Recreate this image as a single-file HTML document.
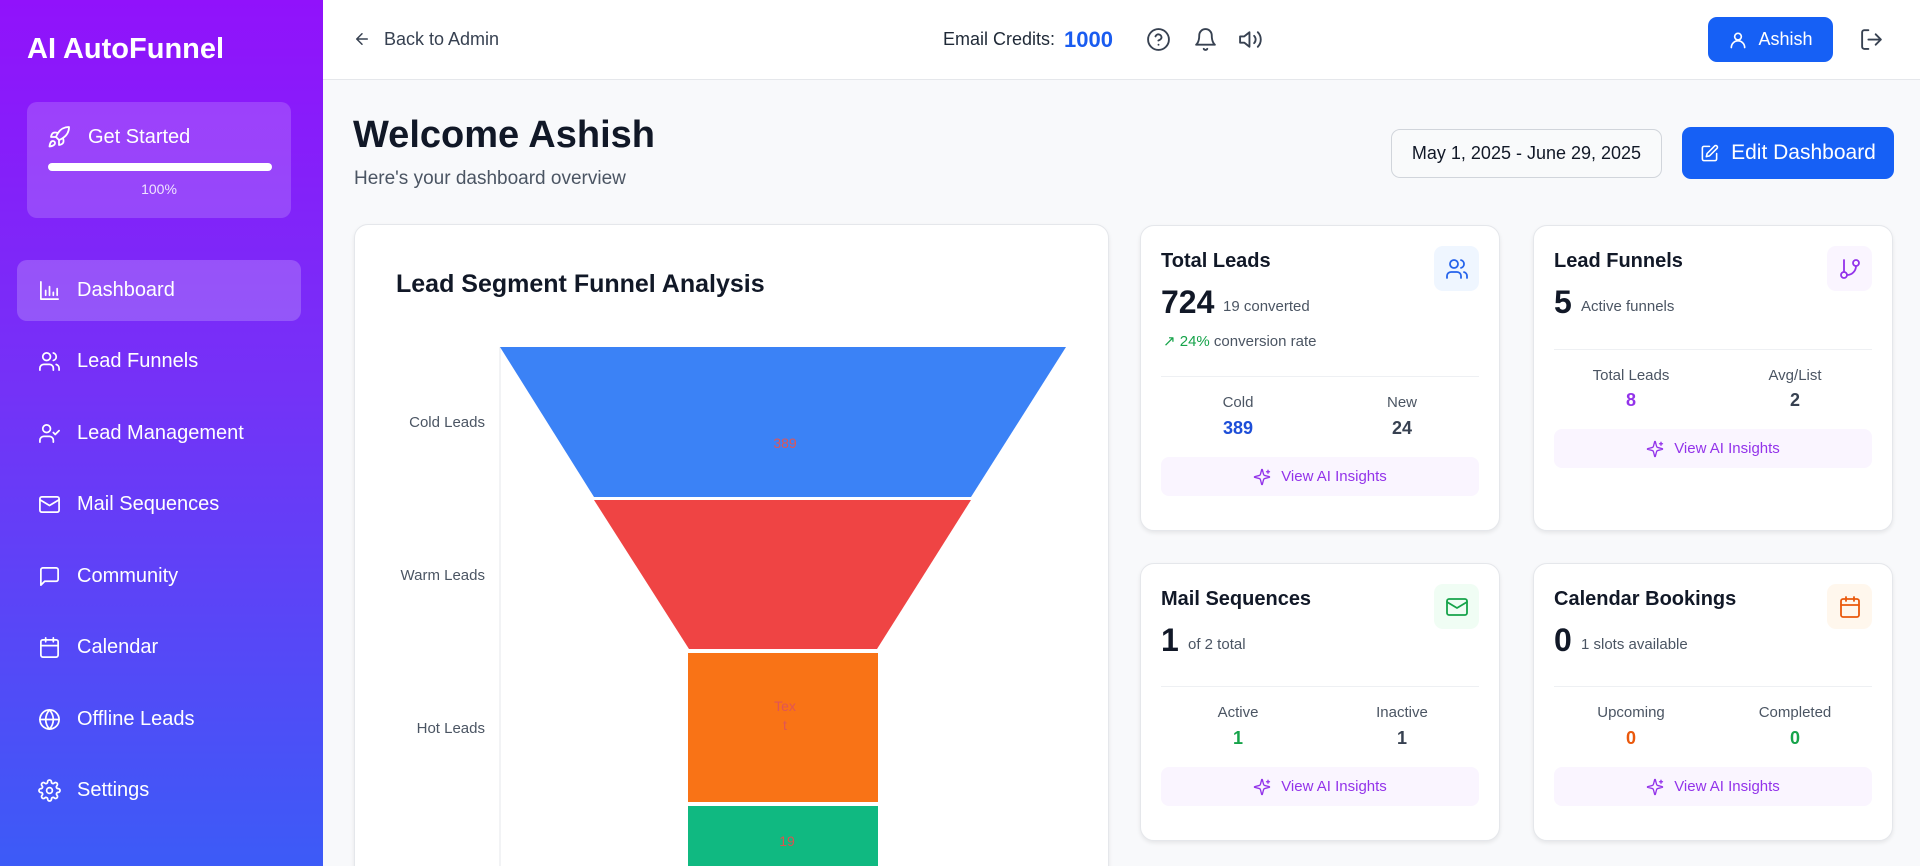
<!DOCTYPE html>
<html style="width:1920px;height:866px;overflow:hidden"><head><meta charset="utf-8"><style>
*{box-sizing:border-box;margin:0;padding:0}
body{width:1920px;height:866px;overflow:hidden;font-family:"Liberation Sans",Arial,sans-serif;background:#f8f9fb;position:relative;color:#111827}
.abs{position:absolute}
.sb{left:0;top:0;width:323px;height:866px;background:linear-gradient(180deg,#9112fb 0%,#7432f7 45%,#3c5bf7 100%)}
.logo{left:27px;top:33px;color:#fff;font-size:29px;font-weight:bold}
.gs{left:27px;top:102px;width:264px;height:116px;border-radius:10px;background:rgba(255,255,255,.17)}
.nav{left:17px;width:284px;height:61px;border-radius:10px;color:#fff;font-size:20px;display:flex;align-items:center;padding-left:21px}
.nav svg{width:23px;height:23px;margin-right:16px;fill:none;stroke:#fff;stroke-width:1.8;stroke-linecap:round;stroke-linejoin:round}
.nav.act{background:rgba(255,255,255,.2)}
.hdr{left:323px;top:0;width:1597px;height:80px;background:#fff;border-bottom:1px solid #e5e7eb}
svg.i{fill:none;stroke-linecap:round;stroke-linejoin:round}
.card{background:#fff;border:1px solid #e5e7eb;border-radius:14px;box-shadow:0 2px 4px rgba(0,0,0,.08)}
.ct{font-size:20px;font-weight:bold;color:#111827}
.big{font-size:32px;font-weight:bold;color:#111827}
.sub{font-size:15px;color:#4b5563}
.lab{font-size:15px;color:#4b5563;text-align:center;width:160px}
.val{font-size:18px;font-weight:bold;text-align:center;width:160px}
.ai{height:39px;width:318px;border-radius:8px;background:#faf5ff;color:#9333ea;font-size:15px;display:flex;align-items:center;justify-content:center}
.ai svg{width:18px;height:18px;margin-right:10px;stroke:#9333ea;stroke-width:1.8}
.ib{width:45px;height:45px;border-radius:9px;display:flex;align-items:center;justify-content:center}
.ib svg{width:24px;height:24px;stroke-width:1.8}
.div{height:1px;background:#eef0f3;width:318px}
</style></head><body>
<div class="abs sb"></div>
<div class="abs logo">AI AutoFunnel</div>
<div class="abs gs"></div>
<svg class="abs i" style="left:47px;top:125px" width="24" height="24" viewBox="0 0 24 24" stroke="#fff" stroke-width="1.8"><path d="M4.5 16.5c-1.5 1.26-2 5-2 5s3.74-.5 5-2c.71-.84.7-2.130-.09-2.91a2.18 2.18 0 0 0-2.91-.09z"/><path d="m12 15-3-3a22 22 0 0 1 2-3.95A12.88 12.88 0 0 1 22 2c0 2.72-.78 7.5-6 11a22.350 22.350 0 0 1-4 2z"/><path d="M9 12H4s.55-3.03 2-4c1.62-1.08 5 0 5 0"/><path d="M12 15v5s3.03-.55 4-2c1.08-1.62 0-5 0-5"/></svg>
<div class="abs" style="left:88px;top:126px;color:#fff;font-size:20px">Get Started</div>
<div class="abs" style="left:48px;top:163px;width:224px;height:8px;border-radius:4px;background:#fff"></div>
<div class="abs" style="left:27px;top:181px;width:264px;text-align:center;color:rgba(255,255,255,.85);font-size:14px">100%</div>

<div class="abs nav act" style="top:260px"><svg viewBox="0 0 24 24"><path d="M3 3v18h18"/><path d="M8 17v-5M12 17V8M16 17v-3M20 17V10"/></svg>Dashboard</div>
<div class="abs nav" style="top:331px"><svg viewBox="0 0 24 24"><path d="M16 21v-2a4 4 0 0 0-4-4H6a4 4 0 0 0-4 4v2"/><circle cx="9" cy="7" r="4"/><path d="M22 21v-2a4 4 0 0 0-3-3.87M16 3.13a4 4 0 0 1 0 7.75"/></svg>Lead Funnels</div>
<div class="abs nav" style="top:403px"><svg viewBox="0 0 24 24"><path d="M16 21v-2a4 4 0 0 0-4-4H6a4 4 0 0 0-4 4v2"/><circle cx="9" cy="7" r="4"/><path d="m16 11 2 2 4-4"/></svg>Lead Management</div>
<div class="abs nav" style="top:474px"><svg viewBox="0 0 24 24"><rect x="2" y="4" width="20" height="16" rx="2"/><path d="m22 7-10 6L2 7"/></svg>Mail Sequences</div>
<div class="abs nav" style="top:546px"><svg viewBox="0 0 24 24"><path d="M21 15a2 2 0 0 1-2 2H7l-4 4V5a2 2 0 0 1 2-2h14a2 2 0 0 1 2 2z"/></svg>Community</div>
<div class="abs nav" style="top:617px"><svg viewBox="0 0 24 24"><rect x="3" y="4" width="18" height="18" rx="2"/><path d="M16 2v4M8 2v4M3 10h18"/></svg>Calendar</div>
<div class="abs nav" style="top:689px"><svg viewBox="0 0 24 24"><circle cx="12" cy="12" r="10"/><path d="M2 12h20M12 2a15.3 15.3 0 0 1 4 10 15.3 15.3 0 0 1-4 10 15.3 15.3 0 0 1-4-10 15.3 15.3 0 0 1 4-10z"/></svg>Offline Leads</div>
<div class="abs nav" style="top:760px"><svg viewBox="0 0 24 24"><circle cx="12" cy="12" r="3"/><path d="M19.4 15a1.65 1.65 0 0 0 .33 1.820l.06.06a2 2 0 1 1-2.83 2.830l-.06-.06a1.65 1.65 0 0 0-1.82-.33 1.65 1.65 0 0 0-1 1.51V21a2 2 0 1 1-4 0v-.09A1.65 1.65 0 0 0 9 19.4a1.65 1.65 0 0 0-1.82.33l-.06.06a2 2 0 1 1-2.83-2.83l.06-.06a1.65 1.65 0 0 0 .33-1.82 1.65 1.65 0 0 0-1.51-1H3a2 2 0 1 1 0-4h.09A1.65 1.65 0 0 0 4.6 9a1.65 1.65 0 0 0-.33-1.82l-.06-.06a2 2 0 1 1 2.83-2.83l.06.06a1.65 1.65 0 0 0 1.82.33H9a1.65 1.65 0 0 0 1-1.51V3a2 2 0 1 1 4 0v.09a1.65 1.65 0 0 0 1 1.51 1.65 1.65 0 0 0 1.82-.33l.06-.06a2 2 0 1 1 2.83 2.83l-.06.06a1.65 1.65 0 0 0-.33 1.82V9a1.65 1.65 0 0 0 1.51 1H21a2 2 0 1 1 0 4h-.09a1.65 1.65 0 0 0-1.51 1z"/></svg>Settings</div>

<div class="abs hdr"></div>
<svg class="abs i" style="left:353px;top:30px" width="18" height="18" viewBox="0 0 24 24" stroke="#374151" stroke-width="2"><path d="M19 12H5M12 19l-7-7 7-7"/></svg>
<div class="abs" style="left:384px;top:29px;font-size:18px;color:#374151">Back to Admin</div>
<div class="abs" style="left:943px;top:29px;font-size:18px;color:#1f2937">Email Credits:</div>
<div class="abs" style="left:1064px;top:27px;font-size:22px;font-weight:bold;color:#1a5cf0">1000</div>
<svg class="abs i" style="left:1146px;top:27px" width="25" height="25" viewBox="0 0 24 24" stroke="#374151" stroke-width="1.8"><circle cx="12" cy="12" r="10"/><path d="M9.1 9a3 3 0 0 1 5.8 1c0 2-3 3-3 3M12 17h.01"/></svg>
<svg class="abs i" style="left:1193px;top:27px" width="25" height="25" viewBox="0 0 24 24" stroke="#374151" stroke-width="1.8"><path d="M6 8a6 6 0 0 1 12 0c0 7 3 9 3 9H3s3-2 3-9M10.3 21a1.94 1.94 0 0 0 3.4 0"/></svg>
<svg class="abs i" style="left:1238px;top:27px" width="25" height="25" viewBox="0 0 24 24" stroke="#374151" stroke-width="1.8"><path d="M11 5 6 9H2v6h4l5 4V5zM15.5 8.5a5 5 0 0 1 0 7M19 5a10 10 0 0 1 0 14"/></svg>
<div class="abs" style="left:1708px;top:17px;width:125px;height:45px;border-radius:9px;background:#1660f5;color:#fff;font-size:18px;display:flex;align-items:center;justify-content:center"><svg class="i" width="20" height="20" viewBox="0 0 24 24" stroke="#fff" stroke-width="2" style="margin-right:10px"><circle cx="12" cy="8" r="4"/><path d="M20 21a8 8 0 0 0-16 0"/></svg>Ashish</div>
<svg class="abs i" style="left:1859px;top:27px" width="25" height="25" viewBox="0 0 24 24" stroke="#374151" stroke-width="1.8"><path d="M9 21H5a2 2 0 0 1-2-2V5a2 2 0 0 1 2-2h4M16 17l5-5-5-5M21 12H9"/></svg>

<div class="abs" style="left:353px;top:114px;font-size:38px;font-weight:bold;color:#111827">Welcome Ashish</div>
<div class="abs" style="left:354px;top:168px;font-size:19px;color:#4b5563">Here's your dashboard overview</div>
<div class="abs" style="left:1391px;top:129px;width:271px;height:49px;border:1px solid #d1d5db;border-radius:9px;background:#f9fafb;display:flex;align-items:center;justify-content:center;font-size:18px;color:#111827">May 1, 2025 - June 29, 2025</div>
<div class="abs" style="left:1682px;top:127px;width:212px;height:52px;border-radius:9px;background:#1660f5;color:#fff;font-size:21px;display:flex;align-items:center;justify-content:center"><svg class="i" width="19" height="19" viewBox="0 0 24 24" stroke="#fff" stroke-width="2" style="margin-right:12px"><path d="M12 3H5a2 2 0 0 0-2 2v14a2 2 0 0 0 2 2h14a2 2 0 0 0 2-2v-7"/><path d="M18.4 2.6a2.1 2.1 0 0 1 3 3L12 15l-4 1 1-4z"/></svg>Edit Dashboard</div>

<div class="abs card" style="left:354px;top:224px;width:755px;height:660px"></div>
<div class="abs" style="left:396px;top:270px;font-size:25px;font-weight:bold;color:#111827">Lead Segment Funnel Analysis</div>
<svg class="abs" style="left:354px;top:224px" width="755" height="642" viewBox="354 224 755 642">
<line x1="500" y1="347" x2="500" y2="866" stroke="#e5e7eb" stroke-width="1"/>
<polygon points="500,347 1066,347 971,497 594,497" fill="#3b82f6"/>
<polygon points="594,500 971,500 877,649 689,649" fill="#ef4444"/>
<rect x="688" y="653" width="190" height="149" fill="#f97316"/>
<rect x="688" y="806" width="190" height="70" fill="#10b981"/>
<g font-family="Liberation Sans,Arial,sans-serif" font-size="14" fill="#e05555" text-anchor="middle">
<text x="785" y="448">389</text><text x="785" y="711">Tex</text><text x="785" y="730">t</text><text x="787" y="846" fill="#d9534f">19</text>
</g>
<g font-family="Liberation Sans,Arial,sans-serif" font-size="15" fill="#4b5563" text-anchor="end">
<text x="485" y="427">Cold Leads</text><text x="485" y="580">Warm Leads</text><text x="485" y="733">Hot Leads</text>
</g>
</svg>

<div class="abs card" style="left:1140px;top:225px;width:360px;height:306px"></div>
<div class="abs ct" style="left:1161px;top:250px">Total Leads</div>
<div class="abs ib" style="left:1434px;top:246px;background:#eff6ff"><svg class="i" viewBox="0 0 24 24" stroke="#2563eb"><path d="M16 21v-2a4 4 0 0 0-4-4H6a4 4 0 0 0-4 4v2"/><circle cx="9" cy="7" r="4"/><path d="M22 21v-2a4 4 0 0 0-3-3.87M16 3.13a4 4 0 0 1 0 7.75"/></svg></div>
<div class="abs big" style="left:1161px;top:284px">724</div>
<div class="abs sub" style="left:1223px;top:298px">19 converted</div>
<div class="abs sub" style="left:1163px;top:332px"><span style="color:#16a34a">↗ 24%</span> conversion rate</div>
<div class="abs div" style="left:1161px;top:376px"></div>
<div class="abs lab" style="left:1158px;top:394px">Cold</div><div class="abs val" style="left:1158px;top:418px;color:#1d4ed8">389</div>
<div class="abs lab" style="left:1322px;top:394px">New</div><div class="abs val" style="left:1322px;top:418px;color:#374151">24</div>
<div class="abs ai" style="left:1161px;top:457px"><svg class="i" viewBox="0 0 24 24"><path d="M9.9 15.5A2 2 0 0 0 8.5 14.1L2.4 12.5a.5.5 0 0 1 0-1l6.1-1.6A2 2 0 0 0 9.9 8.5l1.6-6.1a.5.5 0 0 1 1 0l1.6 6.1a2 2 0 0 0 1.4 1.4l6.1 1.6a.5.5 0 0 1 0 1l-6.1 1.6a2 2 0 0 0-1.4 1.4l-1.6 6.1a.5.5 0 0 1-1 0z"/><path d="M20 3v4M22 5h-4"/></svg>View AI Insights</div>

<div class="abs card" style="left:1533px;top:225px;width:360px;height:306px"></div>
<div class="abs ct" style="left:1554px;top:250px">Lead Funnels</div>
<div class="abs ib" style="left:1827px;top:246px;background:#faf5ff"><svg class="i" viewBox="0 0 24 24" stroke="#9333ea"><circle cx="6" cy="18" r="3"/><circle cx="18" cy="6" r="3"/><path d="M6 3v12M18 9a9 9 0 0 1-9 9"/></svg></div>
<div class="abs big" style="left:1554px;top:284px">5</div>
<div class="abs sub" style="left:1581px;top:298px">Active funnels</div>
<div class="abs div" style="left:1554px;top:349px"></div>
<div class="abs lab" style="left:1551px;top:367px">Total Leads</div><div class="abs val" style="left:1551px;top:390px;color:#9333ea">8</div>
<div class="abs lab" style="left:1715px;top:367px">Avg/List</div><div class="abs val" style="left:1715px;top:390px;color:#374151">2</div>
<div class="abs ai" style="left:1554px;top:429px"><svg class="i" viewBox="0 0 24 24"><path d="M9.9 15.5A2 2 0 0 0 8.5 14.1L2.4 12.5a.5.5 0 0 1 0-1l6.1-1.6A2 2 0 0 0 9.9 8.5l1.6-6.1a.5.5 0 0 1 1 0l1.6 6.1a2 2 0 0 0 1.4 1.4l6.1 1.6a.5.5 0 0 1 0 1l-6.1 1.6a2 2 0 0 0-1.4 1.4l-1.6 6.1a.5.5 0 0 1-1 0z"/><path d="M20 3v4M22 5h-4"/></svg>View AI Insights</div>

<div class="abs card" style="left:1140px;top:563px;width:360px;height:278px"></div>
<div class="abs ct" style="left:1161px;top:588px">Mail Sequences</div>
<div class="abs ib" style="left:1434px;top:584px;background:#f0fdf4"><svg class="i" viewBox="0 0 24 24" stroke="#16a34a"><rect x="2" y="4" width="20" height="16" rx="2"/><path d="m22 7-10 6L2 7"/></svg></div>
<div class="abs big" style="left:1161px;top:622px">1</div>
<div class="abs sub" style="left:1188px;top:636px">of 2 total</div>
<div class="abs div" style="left:1161px;top:686px"></div>
<div class="abs lab" style="left:1158px;top:704px">Active</div><div class="abs val" style="left:1158px;top:728px;color:#16a34a">1</div>
<div class="abs lab" style="left:1322px;top:704px">Inactive</div><div class="abs val" style="left:1322px;top:728px;color:#374151">1</div>
<div class="abs ai" style="left:1161px;top:767px"><svg class="i" viewBox="0 0 24 24"><path d="M9.9 15.5A2 2 0 0 0 8.5 14.1L2.4 12.5a.5.5 0 0 1 0-1l6.1-1.6A2 2 0 0 0 9.9 8.5l1.6-6.1a.5.5 0 0 1 1 0l1.6 6.1a2 2 0 0 0 1.4 1.4l6.1 1.6a.5.5 0 0 1 0 1l-6.1 1.6a2 2 0 0 0-1.4 1.4l-1.6 6.1a.5.5 0 0 1-1 0z"/><path d="M20 3v4M22 5h-4"/></svg>View AI Insights</div>

<div class="abs card" style="left:1533px;top:563px;width:360px;height:278px"></div>
<div class="abs ct" style="left:1554px;top:588px">Calendar Bookings</div>
<div class="abs ib" style="left:1827px;top:584px;background:#fff7ed"><svg class="i" viewBox="0 0 24 24" stroke="#ea580c"><rect x="3" y="4" width="18" height="18" rx="2"/><path d="M16 2v4M8 2v4M3 10h18"/></svg></div>
<div class="abs big" style="left:1554px;top:622px">0</div>
<div class="abs sub" style="left:1581px;top:636px">1 slots available</div>
<div class="abs div" style="left:1554px;top:686px"></div>
<div class="abs lab" style="left:1551px;top:704px">Upcoming</div><div class="abs val" style="left:1551px;top:728px;color:#ea580c">0</div>
<div class="abs lab" style="left:1715px;top:704px">Completed</div><div class="abs val" style="left:1715px;top:728px;color:#16a34a">0</div>
<div class="abs ai" style="left:1554px;top:767px"><svg class="i" viewBox="0 0 24 24"><path d="M9.9 15.5A2 2 0 0 0 8.5 14.1L2.4 12.5a.5.5 0 0 1 0-1l6.1-1.6A2 2 0 0 0 9.9 8.5l1.6-6.1a.5.5 0 0 1 1 0l1.6 6.1a2 2 0 0 0 1.4 1.4l6.1 1.6a.5.5 0 0 1 0 1l-6.1 1.6a2 2 0 0 0-1.4 1.4l-1.6 6.1a.5.5 0 0 1-1 0z"/><path d="M20 3v4M22 5h-4"/></svg>View AI Insights</div>
</body></html>
